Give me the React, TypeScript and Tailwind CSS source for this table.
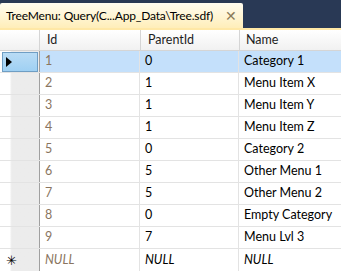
import React from "react";

// rows of the query result grid
const rows: [string, string, string][] = [
  ["1", "0", "Category 1"],
  ["2", "1", "Menu Item X"],
  ["3", "1", "Menu Item Y"],
  ["4", "1", "Menu Item Z"],
  ["5", "0", "Category 2"],
  ["6", "5", "Other Menu 1"],
  ["7", "5", "Other Menu 2"],
  ["8", "0", "Empty Category"],
  ["9", "7", "Menu Lvl 3"],
];

function RowHeader({ selected, isNew }: { selected?: boolean; isNew?: boolean }) {
  return (
    <div className="w-[40px] shrink-0 border-r border-[#a0a0a0] bg-gradient-to-r from-white from-[25%] to-[#ececec] to-[30%] flex items-center">
      {selected ? (
        <div className="ml-[2px] w-[36px] h-[20px] border border-[#6f9ec4] bg-gradient-to-b from-[#b9dcf5] to-[#9fd0f3] flex items-center pl-[3px]">
          <svg width="6" height="10" viewBox="0 0 6 10">
            <path d="M0 0 L6 5 L0 10 Z" fill="#000" />
          </svg>
        </div>
      ) : isNew ? (
        <span className="ml-[6px] text-[13px] leading-none text-black">✳</span>
      ) : null}
    </div>
  );
}

export default function App() {
  return (
    <div
      className="w-[341px] h-[272px] overflow-hidden bg-[#293955] text-[12.5px]"
      style={{ fontFamily: 'Lato, "Open Sans", sans-serif' }}
    >
      {/* Tab strip */}
      <div className="h-[28px] pt-[3px] flex">
        <div className="w-[243px] h-[25px] rounded-t-[2px] bg-gradient-to-b from-[#fffcf0] to-[#ffeeb9] flex items-center pl-[6px] pr-[6px] text-black">
          <span className="flex-1 whitespace-nowrap text-[12px] tracking-[-0.15px]">TreeMenu: Query(C...App_Data\Tree.sdf)</span>
          <span className="text-[#8a7a5a] text-[14px] leading-none">✕</span>
        </div>
      </div>
      <div className="h-[2px] bg-[#ffe8a6]" />

      {/* Grid */}
      <div className="bg-white h-[242px]">
        {/* Header row */}
        <div className="h-[21px] flex bg-gradient-to-b from-white to-[#f1f1f1] border-b border-[#d5d5d5] text-[#1e1e1e]">
          <div className="w-[40px] shrink-0 border-r border-[#d5d5d5]" />
          <div className="w-[101px] shrink-0 border-r border-[#d5d5d5] pl-[7px] flex items-center">Id</div>
          <div className="w-[99px] shrink-0 border-r border-[#d5d5d5] pl-[7px] flex items-center">ParentId</div>
          <div className="flex-1 pl-[6px] flex items-center">Name</div>
        </div>

        {rows.map(([id, parent, name], i) => (
          <div key={id} className="h-[22px] flex border-b border-[#e3e3e3]">
            <RowHeader selected={i === 0} />
            <div className={`w-[100px] shrink-0 border-r border-[#e3e3e3] pl-[5px] flex items-center text-[#8a7560] ${i === 0 ? "bg-[#c4e0fb]" : ""}`}>
              {id}
            </div>
            <div className={`w-[99px] shrink-0 border-r border-[#e3e3e3] pl-[5px] flex items-center text-black ${i === 0 ? "bg-[#c4e0fb]" : ""}`}>
              {parent}
            </div>
            <div className={`flex-1 pl-[5px] flex items-center text-black ${i === 0 ? "bg-[#c4e0fb]" : ""}`}>
              {name}
            </div>
          </div>
        ))}

        {/* New row */}
        <div className="h-[22px] flex">
          <RowHeader isNew />
          <div className="w-[100px] shrink-0 border-r border-[#e3e3e3] pl-[5px] flex items-center italic text-[#8a7560]">NULL</div>
          <div className="w-[99px] shrink-0 border-r border-[#e3e3e3] pl-[5px] flex items-center italic text-black">NULL</div>
          <div className="flex-1 pl-[5px] flex items-center italic text-black">NULL</div>
        </div>
      </div>
    </div>
  );
}
